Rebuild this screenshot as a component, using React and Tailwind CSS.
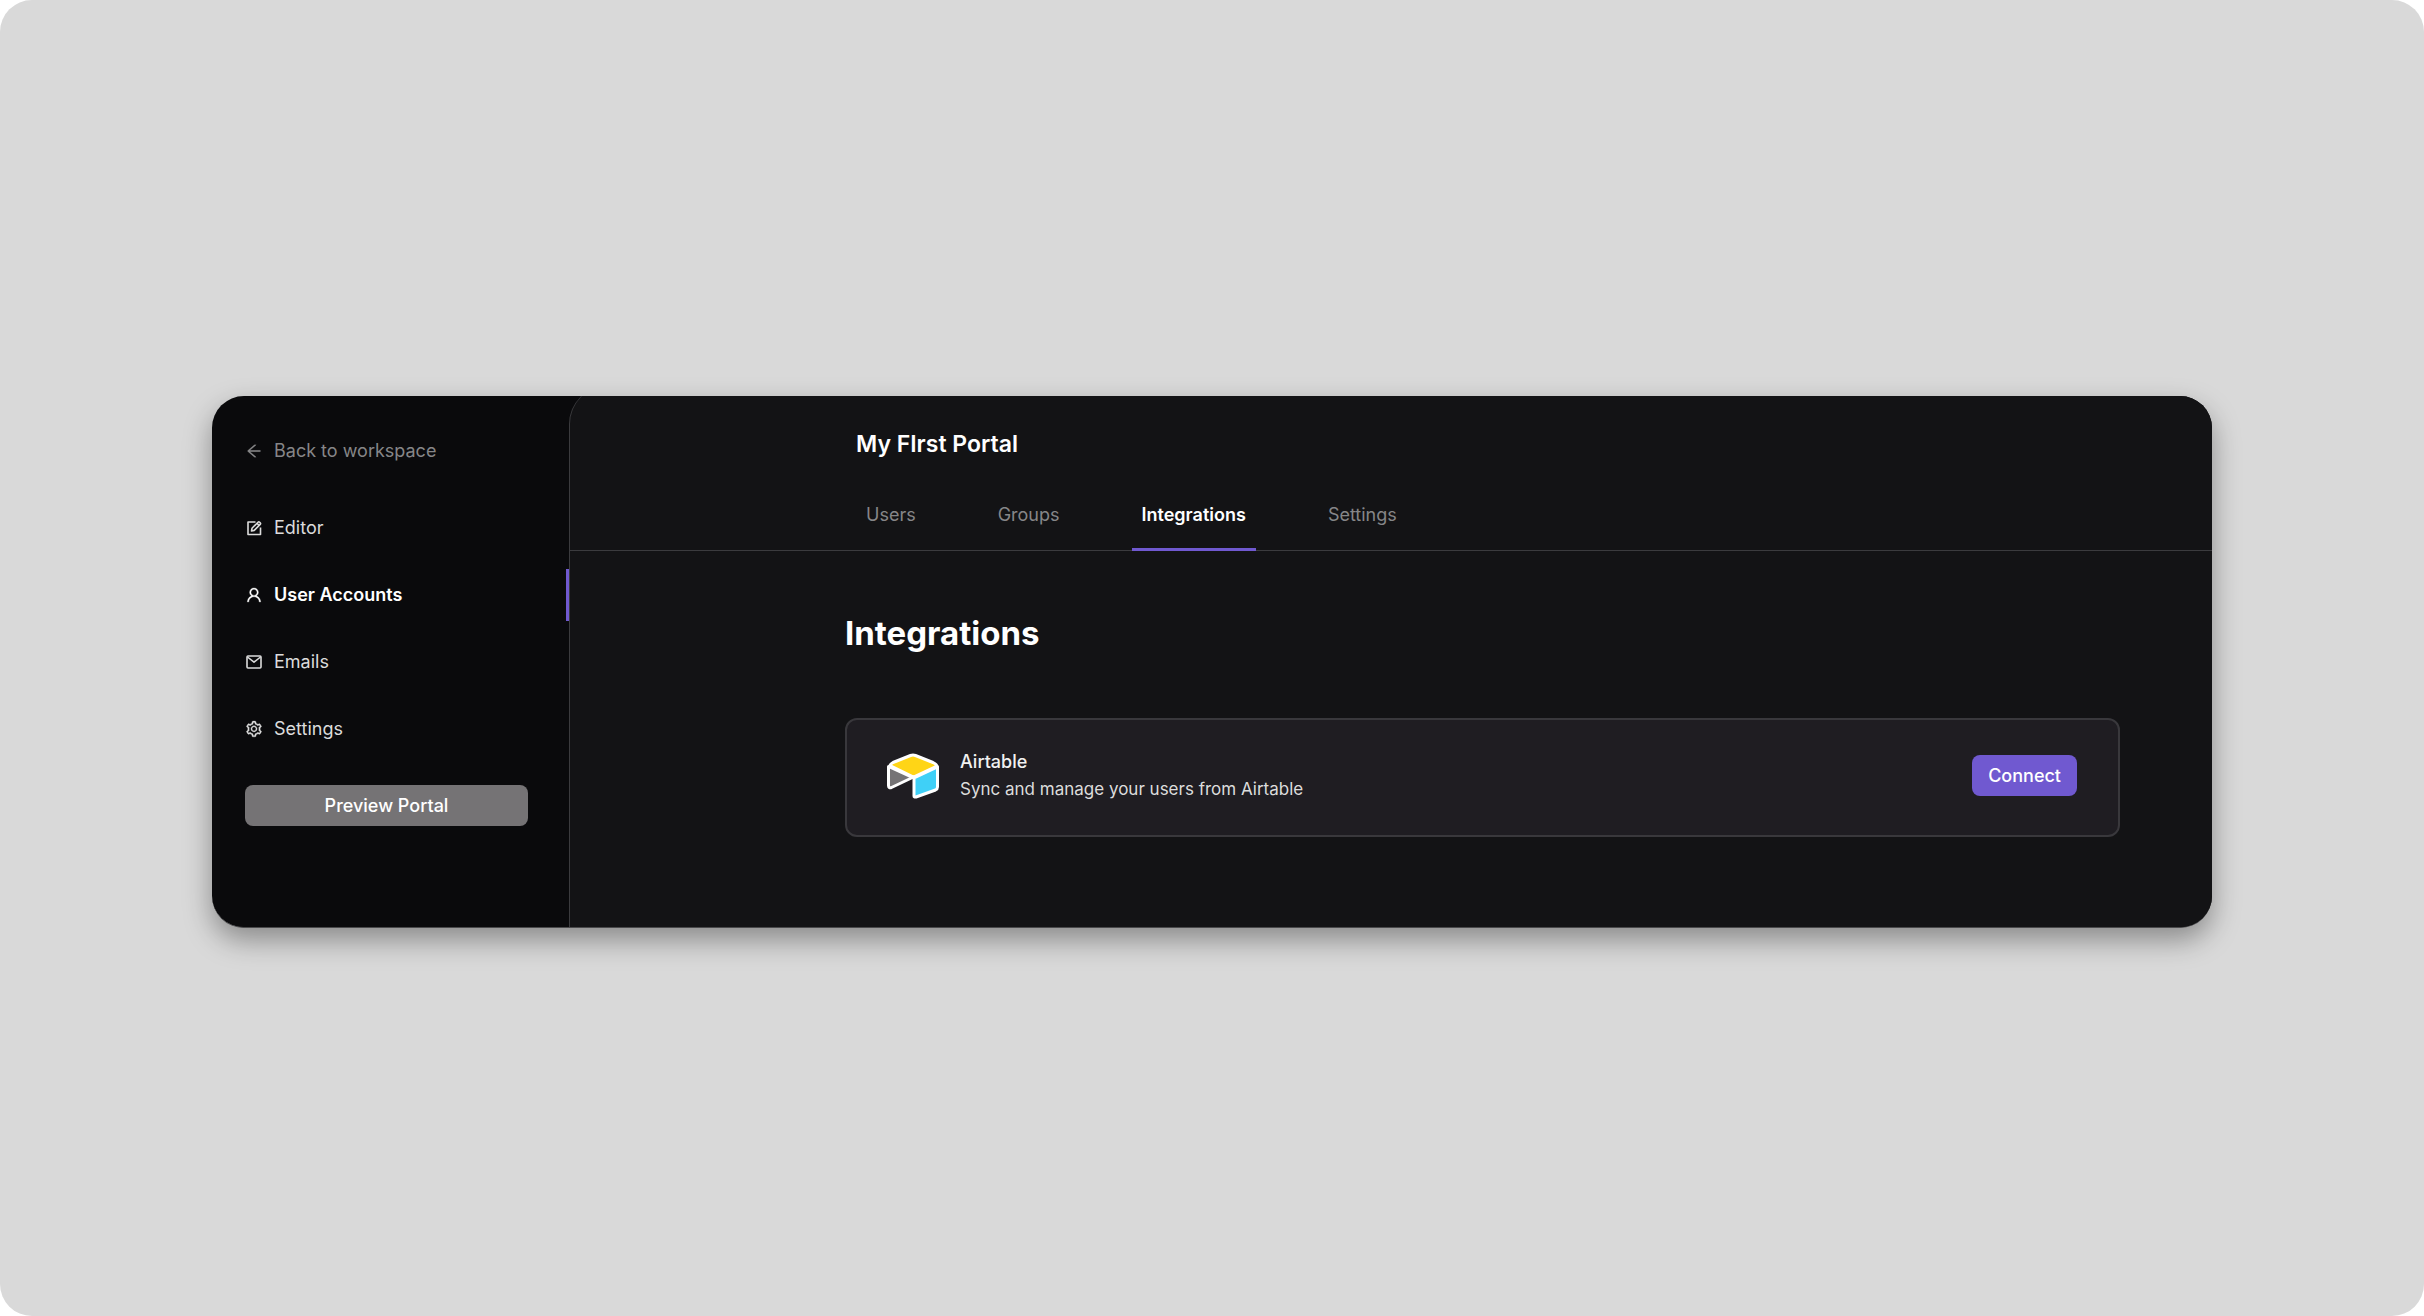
import { useState } from 'react'
import { AiOutlineArrowLeft, AiOutlineSetting, AiOutlineUser } from 'react-icons/ai'

function EditIcon() {
  return (
    <svg viewBox="0 0 18 18" className="size-[18px]" fill="none" stroke="currentColor" strokeWidth="1.6" strokeLinejoin="round" aria-hidden="true">
      <path d="M10.500 3H3V15.500H15.500V8.500" />
      <path d="M6.500 12 7 9.300 13 3.200Q13.800 2.400 14.600 3.200L15.200 3.800Q16 4.600 15.200 5.400L9.200 11.400Z" />
      <path d="M12 4.300 14 6.400" />
    </svg>
  )
}

function MailIcon() {
  return (
    <svg viewBox="0 0 18 18" className="size-[18px]" fill="none" stroke="currentColor" strokeWidth="1.6" strokeLinejoin="round" aria-hidden="true">
      <rect x="2" y="3" width="14" height="12" rx="1" />
      <path d="M2.500 4 9 9.200 15.500 4" />
    </svg>
  )
}

const navItems = [
  { label: 'Editor', icon: <EditIcon /> },
  { label: 'User Accounts', icon: <AiOutlineUser className="size-[18px]" strokeWidth={20} /> },
  { label: 'Emails', icon: <MailIcon /> },
  { label: 'Settings', icon: <AiOutlineSetting className="size-[18px]" strokeWidth={20} /> },
]

const tabs = ['Users', 'Groups', 'Integrations', 'Settings']

function AirtableLogo() {
  return (
    <svg viewBox="0 0 54 46" className="w-[54px] h-[46px] shrink-0" stroke="#fff" strokeWidth="3" strokeLinejoin="round" aria-hidden="true">
      <path d="M2.5 13.5 26.5 24.5 5.5 34.5Q2.5 35.5 2.5 32.5Z" fill="#757375" />
      <path d="M28 25 51.5 14V34Q51.5 36 49.5 37L30 44Q28 44.5 28 43Z" fill="#3fd0f7" />
      <path d="M4 12.5Q5 10.500 7 9.500L24.500 2.500Q27 1.500 29.500 2.500L47 9.500Q50 11 51 13L27.500 24Z" fill="#ffd516" />
    </svg>
  )
}

export default function App() {
  const [page, setPage] = useState('User Accounts')
  const [tab, setTab] = useState('Integrations')

  return (
    <div className="min-h-screen bg-white font-['Inter',sans-serif] text-lg text-[#dcdcdc]">
      <div className="min-h-screen rounded-[32px] bg-[#d9d9d9] px-[212px] pt-[396px] pb-24">
        <div className="flex overflow-hidden rounded-[32px] border-b border-[#4a4a4c] bg-[#0a0a0c] shadow-[0_12px_28px_rgba(0,0,0,0.36)]">

          <aside className="w-[357px] shrink-0 pt-[41px] pb-[101px]">
            <a href="#" className="flex items-center gap-[11px] pl-[33px] leading-7 text-[#868688]">
              <AiOutlineArrowLeft className="size-[18px]" strokeWidth={10} />
              Back to workspace
            </a>

            <nav className="mt-[37px] flex flex-col gap-[15px]">
              {navItems.map(({ label, icon }) => (
                <a
                  key={label}
                  href="#"
                  onClick={() => setPage(label)}
                  className={`flex h-[52px] items-center gap-[11px] border-r-3 pl-[33px] ${page === label ? 'border-[#7059d0] font-semibold text-white' : 'border-transparent'}`}
                >
                  {icon}
                  {label}
                </a>
              ))}
            </nav>

            <div className="mt-[30px] pr-[41px] pl-[33px]">
              <button className="h-[41px] w-full rounded-lg bg-[#757375] font-medium text-white">Preview Portal</button>
            </div>
          </aside>

          <main className="-mt-[10px] min-w-0 flex-1 rounded-tl-[38px] border-l border-[#3b3b3e] bg-[#131315] pt-[10px]">
            <header className="border-b border-[#3b3b3e] pt-8 pl-[286px]">
              <h1 className="text-[23px] leading-8 font-semibold text-white">My FIrst Portal</h1>
              <div role="tablist" className="mt-[26px] -mb-px flex gap-[62px]">
                {tabs.map(name => (
                  <button
                    key={name}
                    role="tab"
                    aria-selected={tab === name}
                    onClick={() => setTab(name)}
                    className={`h-[65px] border-b-3 px-[10px] pb-1 ${tab === name ? 'border-[#7059d0] font-semibold text-white' : 'border-transparent text-[#868688]'}`}
                  >
                    {name}
                  </button>
                ))}
              </div>
            </header>

            <section className="pt-[58px] pr-[92px] pl-[275px]">
              <h2 className="text-[33px] leading-12 font-bold text-white">Integrations</h2>
              <div className="mt-[61px] flex items-center rounded-xl border-2 border-[#39383c] bg-[#1f1d22] pt-7 pr-[41px] pb-8 pl-[39px]">
                <AirtableLogo />
                <div className="ml-5 flex-1">
                  <h3 className="leading-[27px] font-medium text-[#f1f1f1]">Airtable</h3>
                  <p className="text-[17px] leading-7">Sync and manage your users from Airtable</p>
                </div>
                <button className="h-[41px] rounded-lg bg-[#7059d0] px-4 font-medium text-white">Connect</button>
              </div>
            </section>
          </main>

        </div>
      </div>
    </div>
  )
}
